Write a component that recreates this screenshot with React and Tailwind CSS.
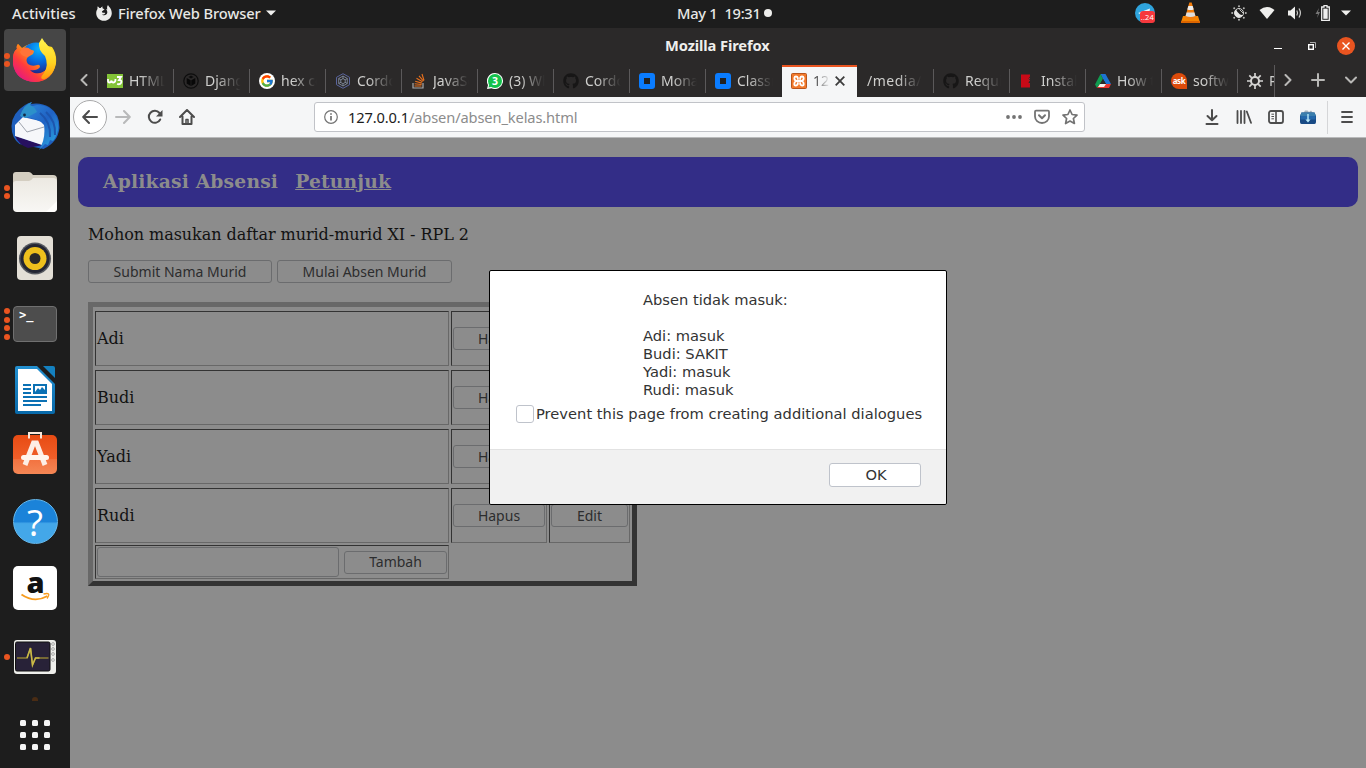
import React from "react";
import { FaGithub } from "react-icons/fa";
import { FcGoogle } from "react-icons/fc";

const line = { fill: "none", stroke: "currentColor", strokeWidth: 2, strokeLinecap: "round", strokeLinejoin: "round" };

/* ---------- top panel ---------- */

function Caret() {
  return (
    <svg width="10" height="6" viewBox="0 0 10 6" className="shrink-0"><path d="M0 .5h10L5 5.5z" fill="#f0f0ee" /></svg>
  );
}

function FirefoxMono() {
  return (
    <svg width="16" height="16" viewBox="0 0 16 16" className="shrink-0">
      <path fill="#ededeb" d="M1.8 1.2 3.4 3c.5-.1 1-.1 1.4 0C5.200 2.200 6 1.700 6.800 1.600 6.300 2.300 6.300 3.100 6.800 3.600L8.600 4.200 7.100 5.500 5.900 6.500C6 7.300 6.600 7.900 7.600 7.800 8.200 7.600 8.900 7.700 9.200 8.200 8.700 9.300 7.200 9.800 6 9.400 7.800 11.200 11 10.200 11.300 7.600 11.400 6 10.700 5 10 4.300 10.500 4.200 11 4.300 11.300 4.500 10.900 2.800 11 1.300 12 0 12.400 1.500 15.800 3 15.800 8.200 15.600 12.600 12.300 15.800 8 15.800S.3 12.600.2 8.200C.2 6 .8 4.700 1.500 3.900 1.300 3 1.400 2 1.800 1.200z" />
    </svg>
  );
}

function TopPanel() {
  return (
    <header className="flex h-7 items-center bg-[#1d1d1d] pb-[3px] pl-3 pr-[15px] text-[14.670px] font-medium leading-5 text-[#e8e8e6]">
      <div className="flex w-[665px] items-center">
        <span className="w-[84px] tracking-[0.050px]">Activities</span>
        <FirefoxMono />
        <span className="ml-1.5 w-[148px] whitespace-nowrap tracking-[-0.080px]">Firefox Web Browser</span>
        <Caret />
      </div>
      <span className="w-[87px] whitespace-pre tracking-[-0.280px]">May 1  19:31</span>
      <span className="h-2 w-2 rounded-full bg-[#eeeeec]" />
      <div className="ml-auto flex items-center">
        <svg width="20" height="20" viewBox="0 0 20 20">
          <circle cx="10" cy="10" r="10" fill="#2fa4dd" />
          <path d="m3 10 12-4.500-1 6-4-2-4 2z" fill="#e9f4fb" />
          <rect x="5" y="8" width="15" height="12" rx="3" fill="#f6383c" />
          <text x="5.800" y="17" fontSize="7.500" fill="white" fontFamily="Open Sans, sans-serif" textLength="13">..24</text>
        </svg>
        <svg className="ml-[26px]" width="19" height="21" viewBox="0 0 19 21">
          <path d="M2 14h15l2 6.500H0z" fill="#f58400" />
          <path d="M0 19h19v2H0z" fill="#dc6500" />
          <path d="M8.300.5h2.400L15 16q-5.500 2.500-11 0z" fill="#f27d0c" />
          <path d="M7.300 4h4.400l1 3.500q-3.200 1.200-6.400 0z" fill="#eee" />
          <path d="M5.600 10.500h7.800l1 3.500q-4.900 1.800-9.800 0z" fill="#ddd" />
        </svg>
        <svg className="ml-[31px]" width="16" height="16" viewBox="0 0 16 16">
          <circle cx="8" cy="8" r="4.500" fill="none" stroke="#d8d8d6" strokeWidth="1" />
          <path d="M5 4.500A4.500 4.500 0 1 0 12 9.800Q10.500 10.300 9 9.500L6.500 7z" fill="#e8e8e6" />
          <path d="m8.500 4.500 3.500 3.500" stroke="#e8e8e6" strokeWidth=".8" />
          <g fill="#b8b8b6"><circle cx="8" cy="1.200" r="1" /><circle cx="8" cy="14.800" r="1" /><circle cx="1.200" cy="8" r="1" /><circle cx="14.800" cy="8" r="1" /><circle cx="3.200" cy="3.200" r="1" /><circle cx="12.800" cy="3.200" r="1" /><circle cx="3.200" cy="12.800" r="1" /><circle cx="12.800" cy="12.800" r="1" /></g>
        </svg>
        <svg className="ml-3" width="16" height="16" viewBox="0 0 16 16"><path d="M.5 5Q8-1 15.500 5L8 14z" fill="#efefed" /></svg>
        <svg className="ml-3" width="16" height="16" viewBox="0 0 16 16">
          <path d="M1 5.500h2.500L8 1.500v13L3.500 10.500H1z" fill="#efefed" />
          <path d="M9.800 5.500q1.500 2.500 0 5M12 3.500q2.800 4.500 0 9" fill="none" stroke="#d0d0ce" strokeWidth="1.200" />
        </svg>
        <svg className="ml-3" width="16" height="16" viewBox="0 0 16 16">
          <path d="M4 3 .5 9H3L2 13l3-6H3z" fill="#777" />
          <path d="M9 .7h3v1.300h2.300v13.300H6.700V2H9z" fill="none" stroke="#eee" strokeWidth="1.300" />
          <rect x="8.300" y="3.600" width="4.400" height="10.200" fill="#eee" />
        </svg>
        <span className="ml-2.5"><Caret /></span>
      </div>
    </header>
  );
}

/* ---------- dock ---------- */

function DockItem({ dots = 0, active = false, children }) {
  return (
    <div className="relative flex h-[66px] shrink-0 items-center justify-center">
      <div className={active ? "flex h-[62px] w-[62px] items-center justify-center rounded-[4px] bg-[#464646]" : "flex"}>{children}</div>
      <div className="absolute left-1 top-0 flex h-full flex-col justify-center gap-[2.500px]">
        {Array.from({ length: dots }, (_, i) => (
          <span key={i} className="h-1.5 w-1.5 rounded-full bg-[#e95420]" />
        ))}
      </div>
    </div>
  );
}

function Dock() {
  return (
    <aside className="flex w-[70px] shrink-0 flex-col bg-[#1d1d1d]">
      <div className="-mt-px" />
      <DockItem dots={2} active>
        <svg width="44" height="46" viewBox="0 0 44 46">
          <defs>
            <linearGradient id="fxBody" x1="0.900" y1="0.100" x2="0.100" y2="0.900"><stop offset="0" stopColor="#ffe226" /><stop offset="0.400" stopColor="#ff9a0e" /><stop offset="0.700" stopColor="#ff3b3d" /><stop offset="1" stopColor="#e31587" /></linearGradient>
            <linearGradient id="fxTail" x1="0" y1="0" x2="0" y2="1"><stop offset="0" stopColor="#fff44f" /><stop offset="0.600" stopColor="#ffd321" /><stop offset="1" stopColor="#ff980e" /></linearGradient>
            <radialGradient id="fxGlobe" cx="0.600" cy="0.200" r="0.900"><stop offset="0" stopColor="#0bb2ff" /><stop offset="0.500" stopColor="#0666dd" /><stop offset="1" stopColor="#2b1670" /></radialGradient>
          </defs>
          <path d="M5 7 9 11Q22 2 35 9L39 10Q44 17 43 26 40 44 22 45 3 44 0 27-1 15 4 12 3 9 5 7z" fill="url(#fxBody)" />
          <circle cx="23" cy="21" r="15.500" fill="url(#fxGlobe)" />
          <path d="M5 7 9 11.500Q13 10 16 12L21 14 20 17 15 20Q12 23 15 27 19 30 24 28 27 27 27 30 24 34 17 33 24 40 32 34 37 29 35 16 30 11 32 5L43 24Q40 44 22 45 3 44 0 27-1 15 4 12 3 9 5 7z" fill="url(#fxBody)" />
          <path d="M31 36Q36 28 32 19 25 13 26 6L29 1Q31 5 36 10 43 15 43 26 41 37 32 42 25 43 31 36z" fill="url(#fxTail)" />
          <path d="M9 11.500Q14 9 18 13L21 14 19 17 14 20Q8 19 7 15z" fill="#ff7338" />
        </svg>
      </DockItem>
      <DockItem>
        <svg width="49" height="48" viewBox="0 0 49 48">
          <defs><linearGradient id="tb" x1="0" y1="0" x2="1" y2="1"><stop offset="0" stopColor="#2f8fde" /><stop offset="0.500" stopColor="#2062c4" /><stop offset="1" stopColor="#2cb1e6" /></linearGradient></defs>
          <path d="M21 0Q17 1 14 3Q1 11 .5 24q0 12 8 18l24 5Q47 40 48.500 26 49 12 38 5 30 0 19 2z" fill="#1f5fbd" />
          <path d="M4 34Q8 43 17 46l15-3Z" fill="#27105f" />
          <path d="M4 23 12 15 33 20Q38 32 31 43L4 34z" fill="#f6f7fa" />
          <path d="m8 20 8 10 17-5" fill="none" stroke="#9ea3ad" strokeWidth="1" />
          <path d="M10 15Q13 5 26 3 40 3 46 16 50 29 42 39L39 38 37 43 34 42 28 48Q35 37 33 23 26 15 10 15z" fill="url(#tb)" />
          <path d="M35 10q10 9 9 23M29 11q11 9 10 24" fill="none" stroke="#1d55ad" strokeWidth="2" />
          <path d="M9 14Q13 2 21 0L19 3Q24 5 26 10L15 16z" fill="#2c91ca" />
          <circle cx="13.500" cy="13" r="1.400" fill="#142a45" />
        </svg>
      </DockItem>
      <DockItem dots={2}>
        <svg width="46" height="42" viewBox="0 0 46 42">
          <defs><linearGradient id="folder" x1="0" y1="0" x2="0" y2="1"><stop offset="0" stopColor="#ece9e2" /><stop offset="1" stopColor="#f8f7f4" /></linearGradient></defs>
          <path d="M4 1h13q2 0 4 3h20q4 0 4 4v10H1V4q0-3 3-3z" fill="#d4cec1" />
          <path d="M1 13q0-3 3-3h13q2 0 4-3h20q4 0 4 4v26q0 4-4 4H5q-4 0-4-4z" fill="url(#folder)" />
          <path d="M45 30 34 41h7q4 0 4-4z" fill="#fffefc" />
        </svg>
      </DockItem>
      <DockItem>
        <svg width="38" height="46" viewBox="0 0 38 46">
          <rect x="1" y="1" width="36" height="44" rx="4" fill="#e3dfd6" />
          <circle cx="19" cy="23.500" r="16" fill="#55585e" /><circle cx="19" cy="23.500" r="14.500" fill="#242633" />
          <circle cx="19" cy="23.500" r="11.500" fill="#eec01d" /><circle cx="19" cy="23.500" r="5.500" fill="#292929" />
        </svg>
      </DockItem>
      <DockItem dots={4}>
        <div className="h-9 w-11 rounded-[4px] border border-[#707070] bg-[#4d4d4d] pl-[5px] pt-0.5 font-['DejaVu_Sans_Mono',monospace] text-[12px] font-bold leading-[12px] text-white">&gt;_</div>
      </DockItem>
      <DockItem>
        <svg width="40" height="48" viewBox="0 0 40 48">
          <defs><linearGradient id="wr" x1="0" y1="0" x2="0" y2="1"><stop offset="0" stopColor="#2390d0" /><stop offset="1" stopColor="#0869a9" /></linearGradient></defs>
          <path d="M2 0h20l18 18v28q0 2-2 2H2q-2 0-2-2V2q0-2 2-2z" fill="url(#wr)" />
          <path d="M3 3h19l15 15v27H3z" fill="#fff" />
          <path d="M28 0h10q2 0 2 2v10z" fill="#1481c0" />
          <path d="M8 19h8M8 23h8M8 27h8M8 31h24M8 35h24M8 39h18" stroke="#0b71b4" strokeWidth="2" />
          <rect x="19" y="19" width="12" height="8" fill="#fff" stroke="#0b71b4" strokeWidth="2" />
          <path d="m20 26 3-4 2 2 2-3 3 3v2z" fill="#0b71b4" />
        </svg>
      </DockItem>
      <DockItem>
        <svg className="mb-[6px]" width="46" height="44" viewBox="0 0 46 44">
          <defs><linearGradient id="sw" x1="0" y1="0" x2="0" y2="1"><stop offset="0" stopColor="#e84b13" /><stop offset="0.620" stopColor="#f05f2a" /><stop offset="0.630" stopColor="#f27240" /><stop offset="1" stopColor="#f58755" /></linearGradient></defs>
          <rect x="1" y="4" width="44" height="39" rx="5" fill="url(#sw)" />
          <path d="M17 7.500V2h12v5.500" fill="none" stroke="#fbe7d9" strokeWidth="2" />
          <path d="M13 34 21.500 12h3L33 34" fill="none" stroke="#fdeee6" strokeWidth="5" />
          <rect x="9" y="24" width="28" height="5" rx="2.500" fill="#fff5ee" />
        </svg>
      </DockItem>
      <DockItem>
        <div className="mb-px flex h-[45px] w-[45px] items-center justify-center rounded-full border border-[#65b8ec] bg-linear-to-b from-[#1b83d9] from-50% to-[#43a7e9] to-55% font-['Open_Sans',sans-serif] text-[37px] leading-none text-white">?</div>
      </DockItem>
      <DockItem>
        <svg width="46" height="46" viewBox="0 0 46 46">
          <rect x="1" y="1" width="44" height="44" rx="5" fill="#fff" />
          <text x="14.500" y="28" fontSize="29" fontWeight="800" fontFamily="Open Sans, sans-serif" fill="#111">a</text>
          <path d="M9.500 29.500q13 9 26 1.500" fill="none" stroke="#f79c1e" strokeWidth="1.800" />
          <path d="M31.500 29q4-1 5 0t-1.500 4.500" fill="none" stroke="#f79c1e" strokeWidth="1.300" />
        </svg>
      </DockItem>
      <div className="mt-[3px]" />
      <DockItem dots={1}>
        <svg width="42" height="34" viewBox="0 0 42 34">
          <rect width="42" height="34" rx="3" fill="#eeefeb" />
          <rect x="1.500" y="2" width="34.500" height="29" rx="1.500" fill="#282238" stroke="#111" />
          <path d="M3 18h10l3.500-10 2 17 3-7h13" fill="none" stroke="#8f8034" strokeWidth="1.300" />
          <path d="m13 18 3.500-10 2 17 3-7h4" fill="none" stroke="#c9b947" strokeWidth="1.600" />
          <g fill="none" stroke="#aaa"><circle cx="39" cy="4" r="1.400" /><circle cx="39" cy="9" r="1.400" /><circle cx="39" cy="14" r="1.400" /><circle cx="39" cy="20" r="1.400" /></g>
        </svg>
      </DockItem>
      <div className="mx-auto mt-[7px] h-1 w-1.5 rounded-t-full bg-[#4a2c14]" />
      <div className="mx-auto mt-[19px] grid grid-cols-3 gap-1.5">
        {Array.from({ length: 9 }, (_, i) => <span key={i} className="h-1.5 w-1.5 rounded-[1.500px] bg-[#f5f5f5]" />)}
      </div>
    </aside>
  );
}

/* ---------- browser tabs ---------- */

const W3 = () => (
  <svg width="16" height="14" viewBox="0 0 16 14"><rect width="16" height="14" fill="#83c337" /><path d="M1 5v1.500q0 2 1.500 2T4.500 6.500q0 2 2 2t2-3.500M10 3h4l-2 3q3 0 2.300 2.500T10 10" fill="none" stroke="#fff" strokeWidth="1.800" /></svg>
);
const Box = () => (
  <svg width="16" height="16" viewBox="0 0 16 16"><circle cx="8" cy="8" r="7.200" fill="#2b2929" stroke="#0d0d0d" strokeWidth="1.200" /><path d="m3.700 5 4 2.300v5.700l-4-2.600zM12.300 5l-4 2.300v5.700l4-2.600z" fill="#080808" /><path d="m8 2.500 2.500 1.500L8 5.500 5.500 4z" fill="#0c0c0c" /></svg>
);
const Google = () => (
  <span className="flex h-4 w-4 items-center justify-center rounded-full bg-white"><FcGoogle size={14} /></span>
);
const Cordova = () => (
  <svg width="16" height="16" viewBox="0 0 16 16" fill="none" stroke="#5a659d" strokeWidth="1"><path d="m8 .7 6.500 3.600v7.400L8 15.300 1.500 11.700V4.300z" /><path d="m8 3 4.300 2.500v5L8 13l-4.300-2.500v-5zM8 5.500 10.200 7v2.500L8 10.700 5.800 9.500V7zM8 3v3M3.700 5.500 6 7M12.300 5.500 10 7M8 13v-2M3.700 10.500 6 9.200M12.300 10.500 10 9.200" stroke="#8994a8" strokeWidth=".8" /></svg>
);
const Stack = () => (
  <svg width="16" height="16" viewBox="0 0 16 16" fill="none"><path d="M2 10v5h10v-5" stroke="#aaa" strokeWidth="1.200" /><path d="M3.500 13h7M3.600 10.800l7 .7M4.200 8.200l6.700 1.900M5.500 5.300l6 3.500M8 2.800l4.500 5.300M11 1l2 6.500" stroke="#e8701d" strokeWidth="1.100" /></svg>
);
const WhatsApp = () => (
  <svg width="16" height="16" viewBox="0 0 16 16"><path d="M8 0a8 8 0 1 1-3.500 15.200L0 16l1-4A8 8 0 0 1 8 0z" fill="#fff" /><circle cx="8" cy="8" r="7" fill="#14c24c" /><path d="m1.500 14.500 1-4 3 3z" fill="#14c24c" /><text x="8" y="11.800" textAnchor="middle" fontSize="10.500" fontWeight="700" fill="#fff" fontFamily="Open Sans, sans-serif">3</text></svg>
);
const Github = () => <FaGithub size={16} color="#171616" />;
const Blue = () => <span className="flex h-4 w-4 items-center justify-center rounded-[3px] bg-[#0a7cff]"><span className="h-1.5 w-1.5 bg-[#212121]" /></span>;
const Xampp = () => (
  <svg width="16" height="16" viewBox="0 0 16 16">
    <rect x=".5" y=".5" width="15" height="15" rx="1" fill="#f27a2c" stroke="#b9551c" />
    <g fill="none" stroke="#fff" strokeWidth="1.800" strokeLinejoin="round">
      <path d="M6.800 6.800V4.800Q6.500 3.500 5 3.500T3.300 5 4.800 8Q3.300 9.200 3.300 11T5 12.500t1.800-1.300V9.200M9.200 6.800V4.800Q9.500 3.500 11 3.500T12.700 5 11.200 8Q12.700 9.200 12.700 11T11 12.500t-1.800-1.300V9.200M5 8h6" />
    </g>
  </svg>
);
const Red = () => (
  <svg width="16" height="16" viewBox="0 0 16 16"><path d="M2 1.500h9v2L9.500 5.500l1.500 2-1.500 2 1.500 2v3H2z" fill="#c90a17" /><path d="m11 5-1.500 1.500L11 8m-1 2 1 1" stroke="#932b30" fill="none" /></svg>
);
const Triangle = () => (
  <svg width="16" height="16" viewBox="0 0 16 16"><path d="M5.500 1h5L16 11h-5L8 6z" fill="#1c74d4" /><path d="M5.500 1 8 6 5 11l-3 4-2-3.500z" fill="#119c50" /><path d="M5 11h11l-2 4H2z" fill="#e9342f" /><path d="m8 6 3 5H5z" fill="#2b2929" /><path d="M5 11h6l-2 3H3z" fill="#f4f1ef" /></svg>
);
const Ask = () => (
  <span className="flex h-4 w-4 items-center justify-center rounded-full rounded-br-[3px] bg-[#dd4b0b] text-[8px] font-bold leading-none tracking-[-0.400px] text-white">ask</span>
);
const Gear = () => (
  <svg width="16" height="16" viewBox="0 0 16 16" fill="none" stroke="#d5d4d2"><circle cx="8" cy="8" r="4" strokeWidth="2" /><path d="M8 0v4M8 12v4M0 8h4M12 8h4M2.300 2.300l2.500 2.500M11.200 11.200l2.500 2.500M2.300 13.700l2.500-2.500M11.200 4.800l2.500-2.500" strokeWidth="1.700" /></svg>
);

const tabs = [
  [W3, "HTML"], [Box, "Django"], [Google, "hex co"], [Cordova, "Cordo"], [Stack, "JavaSc"], [WhatsApp, "(3) Wh"],
  [Github, "Cordo"], [Blue, "Monac"], [Blue, "Classr"], [Xampp, "127", true], [null, "/media/h"], [Github, "Requi"],
  [Red, "Instal"], [Triangle, "How t"], [Ask, "softw"], [Gear, "Pr"],
];

function Tab({ Icon, label, active, bar }) {
  if (active) {
    return (
      <div className="ml-px flex h-8 w-[75px] shrink-0 items-center border-t-2 border-[#e95420] bg-[#f5f6f7] pl-[9px] text-[#3f3f3f]">
        <span className="mb-0.5"><Icon /></span>
        <span className="mb-[3px] ml-1.5 w-[17px] overflow-hidden mask-r-from-10% mask-r-to-100%">{label}</span>
        <svg width="10" height="10" viewBox="0 0 10 10" className="mb-0.5 ml-[5px]" stroke="#3d3d3d" strokeWidth="1.800"><path d="m.7.7 8.600 8.600M9.300.7.7 9.300" /></svg>
      </div>
    );
  }
  return (
    <div className="flex h-8 w-[76px] shrink-0 items-center text-[#cfcfcd]">
      <span className={bar ? "h-6 w-px bg-[#5b595a]" : "h-6 w-px"} />
      {Icon && <span className="ml-[9px] flex w-4 shrink-0"><Icon /></span>}
      <span className={Icon ? "mb-0.5 ml-1.5 w-[37px] overflow-hidden whitespace-nowrap mask-r-from-30% mask-r-to-97%" : "mb-0.5 ml-[9px] w-[56px] overflow-hidden whitespace-nowrap tracking-[0.500px] mask-r-from-55% mask-r-to-97%"}>{label}</span>
    </div>
  );
}

function TabStrip() {
  return (
    <div className="flex h-8 items-center text-[14px] text-[#b9b8b6]">
      <span className="flex w-[27px] justify-center"><svg className="mb-0.5" width="8" height="12" viewBox="0 0 8 12" {...line}><path d="M6.500 1 1.500 6l5 5" /></svg></span>
      <div className="flex h-8 w-[1178px] overflow-hidden border-r border-[#5b595a]">
        {tabs.map(([Icon, label, active], i) => <Tab key={i} Icon={Icon} label={label} active={active} bar={i !== 10} />)}
      </div>
      <svg className="mb-0.5 ml-[9px]" width="8" height="12" viewBox="0 0 8 12" {...line}><path d="m1.500 1 5 5-5 5" /></svg>
      <svg className="mb-0.5 ml-[19px]" width="14" height="14" viewBox="0 0 14 14" {...line}><path d="M7 1v12M1 7h12" /></svg>
      <svg className="mb-0.5 ml-5" width="12" height="8" viewBox="0 0 12 8" {...line}><path d="m1 1.500 5 5 5-5" /></svg>
    </div>
  );
}

/* ---------- navigation bar ---------- */

function Toolbar() {
  return (
    <div className="flex h-[41px] items-center border-b border-[#b9babb] bg-[#f5f6f7] text-[#4c4c4c]">
      <span className="ml-[3px] flex h-[34px] w-[34px] items-center justify-center rounded-full border border-[#a9a9aa] bg-white">
        <svg width="16" height="16" viewBox="0 0 16 16" {...line}><path d="M15 8H1.500M7 2 1.200 8 7 14" /></svg>
      </span>
      <svg className="ml-2 text-[#b8b9ba]" width="16" height="16" viewBox="0 0 16 16" {...line}><path d="M1 8h13.500M9 2l5.800 6L9 14" /></svg>
      <svg className="ml-4" width="16" height="16" viewBox="0 0 16 16" {...line}><path d="M13.200 10.500A6 6 0 1 1 12.500 4" /><path d="M15.500 1v6.500H9z" fill="currentColor" stroke="none" /></svg>
      <svg className="ml-4" width="16" height="16" viewBox="0 0 16 16" {...line}><path d="m1 8 7-7 7 7M3.500 7.500V15h9V7.500" /><path d="M7 15v-4.500h2V15" strokeWidth="1.500" /></svg>
      <div className="ml-[119px] flex h-[30px] w-[771px] items-center rounded-[3px] border border-[#c1c3c8] bg-white text-[14.670px] text-[#8c8c8c]">
        <svg className="ml-[9px]" width="14" height="14" viewBox="0 0 14 14"><circle cx="7" cy="7" r="6.300" fill="none" stroke="#737373" strokeWidth="1.200" /><path d="M6.200 6h1.600v4.500H6.200zM6.200 3.200h1.600v1.600H6.200z" fill="#666" /></svg>
        <span className="ml-2.5 tracking-[-0.130px]"><span className="text-[#1c1c1c]">127.0.0.1</span>/absen/absen_kelas.html</span>
        <div className="ml-auto mr-1.5 flex items-center gap-3 text-[#737373]">
          <svg width="16" height="4" viewBox="0 0 16 4" fill="currentColor"><circle cx="2" cy="2" r="1.900" /><circle cx="8" cy="2" r="1.900" /><circle cx="14" cy="2" r="1.900" /></svg>
          <svg width="16" height="16" viewBox="0 0 16 16" {...line}><path d="M2 1.700h12q1 0 1 1V7.500A7 6.500 0 0 1 1 7.500V2.700q0-1 1-1z" strokeWidth="1.800" /><path d="m5 6.300 3 3 3-3" /></svg>
          <svg width="16" height="16" viewBox="0 0 16 16" {...line}><path d="m8 1 2.100 4.500 4.900.6-3.600 3.400 1 5L8 12.100l-4.400 2.400 1-5L1 6.100l4.900-.6z" strokeWidth="1.700" /></svg>
        </div>
      </div>
      <svg className="ml-[119px]" width="16" height="16" viewBox="0 0 16 16" {...line}><path d="M8 1v10M3.500 7 8 11.300 12.500 7M2.500 15h11" /></svg>
      <svg className="ml-4" width="16" height="16" viewBox="0 0 16 16" {...line}><path d="M1.500 2v12M5 2v12M8.500 2v12M10.800 2.500 15 13.800" strokeWidth="1.800" /></svg>
      <svg className="ml-4" width="16" height="16" viewBox="0 0 16 16" {...line}><rect x="1" y="2" width="14" height="12" rx="2" strokeWidth="1.800" /><path d="M8 2v12" strokeWidth="1.600" /><path d="M3.800 5.200h1.800M3.800 7.500h1.800M3.800 9.800h1.800" strokeWidth="1" /></svg>
      <svg className="ml-4" width="16" height="16" viewBox="0 0 16 16">
        <path d="M3.500 4 5 1.500h2.500L9 3l2-1.500L13 4z" fill="#a5b4bf" />
        <path d="M1.500 3.500h13L16 7v6q0 2-1.500 2h-13Q0 15 0 13V7z" fill="#184a85" />
        <path d="M1.500 3.500h13L16 7H0z" fill="#3b7fae" />
        <path d="M.5 7h15v3.500H.5z" fill="#2468ab" />
        <path d="M7.300 5h1.400v5.500h1.800L8 13.500 5.500 10.500h1.800z" fill="#b9eafb" />
      </svg>
      <span className="ml-[11px] h-[33px] w-px bg-[#d5d6d8]" />
      <svg className="ml-[13px]" width="12" height="14" viewBox="0 0 12 14" {...line}><path d="M1 2h10M1 7h10M1 12h10" strokeWidth="1.800" /></svg>
    </div>
  );
}

/* ---------- web page ---------- */

function Button({ className, children }) {
  return (
    <button className={"flex h-[23px] shrink-0 items-center justify-center rounded-[3px] border border-[#6b6c6e] font-['Noto_Sans',sans-serif] text-[14px] leading-none text-[#2c2d2e] " + className}>{children}</button>
  );
}

const cell = "box-border flex items-center border border-t-[#333] border-l-[#333] border-r-[#686868] border-b-[#686868]";

function Page() {
  return (
    <main className="flex min-h-0 flex-1 flex-col bg-[#8c8c8c] pt-[19px] font-['DejaVu_Serif',serif] text-[16px] text-[#121212]">
      <div className="mx-2 flex h-[50px] shrink-0 items-center rounded-[10px] bg-[#332d87] pb-0.5 pl-[25px] text-[18.720px] font-bold tracking-[0.180px] text-[#8c8c8c]">
        <span>Aplikasi Absensi</span>
        <a className="ml-[17px] underline">Petunjuk</a>
      </div>
      <p className="ml-[18px] mt-4 leading-6 tracking-[-0.050px]">Mohon masukan daftar murid-murid XI - RPL 2</p>
      <div className="ml-[18px] mt-[13px] flex gap-[5px]">
        <Button className="w-[184px]">Submit Nama Murid</Button>
        <Button className="w-[175px]">Mulai Absen Murid</Button>
      </div>
      <div className="ml-[18px] mt-[19px] box-border h-[284px] w-[549px] border-[5px] border-t-[#686868] border-l-[#686868] border-r-[#333] border-b-[#333] pl-0.5 pt-1">
        <div className="flex flex-col gap-1">
          {["Adi", "Budi", "Yadi", "Rudi"].map((name) => (
            <div key={name} className="flex h-[55px] gap-0.5">
              <div className={cell + " w-[354px] pl-px"}>{name}</div>
              <div className={cell + " w-24 pl-px"}><Button className="w-[92px]">Hapus</Button></div>
              <div className={cell + " w-[81px] pl-px"}><Button className="w-[77px]">Edit</Button></div>
            </div>
          ))}
        </div>
        <div className={cell + " mt-0.5 h-[34px] w-[354px] pl-px"}>
          <div className="h-[30px] w-[242px] rounded-[3px] border border-[#6b6c6e]" />
          <Button className="ml-[5px] w-[103px]">Tambah</Button>
        </div>
      </div>
    </main>
  );
}

function Dialog() {
  return (
    <div className="absolute left-[489px] top-[270px] flex h-[235px] w-[458px] flex-col rounded-[2px] border border-black bg-white font-['DejaVu_Sans',sans-serif] text-[14.670px] leading-[18px] text-[#333]">
      <div className="h-[178px] pt-5">
        <p className="ml-[153px] whitespace-pre-line">{"Absen tidak masuk:\n\nAdi: masuk\nBudi: SAKIT\nYadi: masuk\nRudi: masuk"}</p>
        <label className="ml-[26px] mt-1.5 flex items-center">
          <span className="h-[18px] w-[18px] shrink-0 rounded-[3px] border border-[#bfc3cb] bg-white" />
          <span className="ml-0.5 whitespace-nowrap tracking-[0.020px]">Prevent this page from creating additional dialogues</span>
        </label>
      </div>
      <div className="flex flex-1 justify-end rounded-b-[2px] border-t border-[#e2e2e2] bg-[#f1f1f1] pr-[25px] pt-[13px]">
        <button className="h-6 w-[92px] rounded-[3px] border border-[#bfc3cb] bg-white pl-0.5">OK</button>
      </div>
    </div>
  );
}

export default function App() {
  return (
    <div className="relative flex h-[768px] w-[1366px] flex-col overflow-hidden font-['Noto_Sans',sans-serif]">
      <TopPanel />
      <div className="flex min-h-0 flex-1">
        <Dock />
        <div className="flex min-w-0 flex-1 flex-col bg-[#2b2929]">
          <div className="flex h-[37px] items-center pb-px text-[14.670px] font-bold text-[#efefed]">
            <span className="mb-[3px] ml-[595px] tracking-[-0.100px]">Mozilla Firefox</span>
            <div className="ml-auto mr-[11px] flex items-center">
              <span className="mt-1 h-px w-2 bg-white" />
              <svg className="ml-[26px]" width="8" height="8" viewBox="0 0 8 8" fill="none"><path d="M2 .5h5.500V6" stroke="#aaa" /><rect x=".7" y="2.700" width="4.600" height="4.600" stroke="#fff" strokeWidth="1.400" /></svg>
              <span className="ml-[21px] flex h-[18px] w-[18px] items-center justify-center rounded-full bg-[#e95420]">
                <svg width="8" height="8" viewBox="0 0 8 8" stroke="#fff" strokeWidth="1.400"><path d="m.5.5 7 7M7.500.5l-7 7" /></svg>
              </span>
            </div>
          </div>
          <TabStrip />
          <Toolbar />
          <Page />
        </div>
      </div>
      <Dialog />
    </div>
  );
}
